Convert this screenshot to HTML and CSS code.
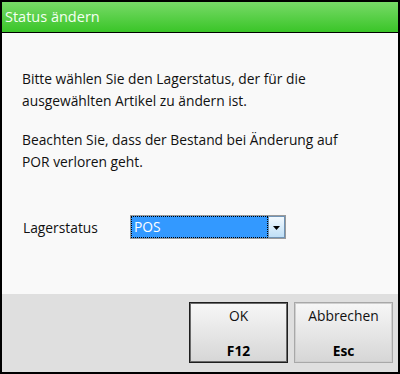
FILE: index.html
```html
<!DOCTYPE html>
<html lang="de">
<head>
<meta charset="utf-8">
<title>Status ändern</title>
<link rel="stylesheet" href="styles.css">
</head>
<body>
<div class="window">
  <div class="titlebar">Status ändern</div>
  <div class="content">
    <p class="text">Bitte wählen Sie den Lagerstatus, der für die<br>ausgewählten Artikel zu ändern ist.</p>
    <p class="text">Beachten Sie, dass der Bestand bei Änderung auf<br>POR verloren geht.</p>
    <div class="field">
      <span class="label">Lagerstatus</span>
      <div class="select">
        <div class="select-value"><span>POS</span></div>
        <div class="select-btn">
          <svg width="7" height="4" viewBox="0 0 7 4"><path d="M0 0H7L3.5 4Z" fill="#000"/></svg>
        </div>
      </div>
    </div>
  </div>
  <div class="footer">
    <div class="btn btn-default"><span class="btn-top">OK</span><span class="btn-key">F12</span></div>
    <div class="btn"><span class="btn-top">Abbrechen</span><span class="btn-key">Esc</span></div>
  </div>
</div>
</body>
</html>
```

FILE: styles.css
```css
* { box-sizing: border-box; }
html, body { margin: 0; padding: 0; background: #000; }
body { font-family: "Open Sans", "Noto Sans", sans-serif; }
.window {
  width: 400px;
  height: 374px;
  border: 2px solid #000;
  background: #f9f9f9;
  display: flex;
  flex-direction: column;
}
.titlebar {
  height: 31px;
  flex: none;
  border-bottom: 1px solid #000;
  background: linear-gradient(#78da68, #3ac528);
  color: #f4fff2;
  font-size: 14.5px;
  line-height: 30px;
  padding-left: 3px;
}
.content {
  flex: 1;
  padding: 35px 20px 0 20px;
  color: #111;
  font-size: 13.8px;
}
.text {
  margin: 0 0 17px 0;
  line-height: 22px;
  white-space: nowrap;
}
.field {
  display: flex;
  align-items: center;
  margin-top: 42px;
}
.label {
  width: 108px;
  padding-left: 1px;
}
.select {
  width: 156px;
  height: 24px;
  border: 1px solid #9a9a9a;
  display: flex;
  background: #fff;
}
.select-value {
  flex: 1;
  background: #3399ff;
  border: 1px dotted #000;
  color: #fff;
  padding-left: 2px;
  line-height: 20px;
}
.select-btn {
  width: 17px;
  border: 1px solid #6f93b5;
  background: linear-gradient(#f2f9fe, #bfdff6);
  display: flex;
  align-items: center;
  justify-content: center;
  padding-top: 1px;
}
.footer {
  height: 78px;
  flex: none;
  background: #dfdfdf;
  display: flex;
  justify-content: flex-end;
  gap: 6px;
  padding: 8px 5px 9px 0;
}
.btn {
  width: 99px;
  border: 1px solid #a8a8a8;
  box-shadow: inset 0 0 0 1px #cfcfcf;
  background: linear-gradient(#f7f7f7, #d6d6d6);
  display: flex;
  flex-direction: column;
  align-items: center;
  justify-content: space-between;
  padding: 3px 0 2px;
  font-size: 13.8px;
  color: #111;
}
.btn-default {
  border-color: #1e1e1e;
  box-shadow: inset 0 0 0 1px #6a6a6a;
}
.btn-key {
  font-weight: bold;
  color: #000;
}
```
